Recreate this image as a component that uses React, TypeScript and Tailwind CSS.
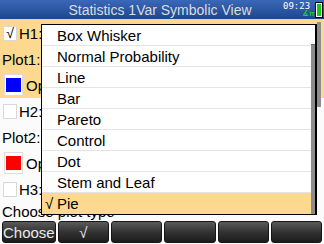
import React from "react";

const plotTypes = [
  "Box Whisker",
  "Normal Probability",
  "Line",
  "Bar",
  "Pareto",
  "Control",
  "Dot",
  "Stem and Leaf",
  "Pie",
];

const softKeys = ["Choose", "√", "", "", "", ""];

function CheckBox({ checked }: { checked?: boolean }) {
  return (
    <div className="ml-[3px] w-[14px] h-[15px] bg-white border border-[#d8d8d8] flex items-center justify-center text-[14px] leading-none text-black">
      {checked ? "√" : ""}
    </div>
  );
}

function ColorBox({ color }: { color: string }) {
  return (
    <div className="ml-[4px] w-[19px] h-[22px] bg-white border border-[#dcdcdc] flex items-center justify-center">
      <div className={`w-[15px] h-[14px] ${color}`} />
    </div>
  );
}

export default function App() {
  return (
    <div className="relative w-[324px] h-[244px] overflow-hidden bg-[#fbfbfb] font-['Liberation_Sans',Arial,sans-serif] text-black">
      {/* Title bar */}
      <div className="relative h-[19px] bg-gradient-to-b from-[#3a68b8] to-[#1d468f] flex items-center justify-center">
        <span className="text-[14px] leading-none text-[#dcdcdc] mr-[4px]">
          Statistics 1Var Symbolic View
        </span>
        <span className="absolute left-[283px] top-[2px] text-[9px] leading-none font-['DejaVu_Sans_Mono',monospace] text-white">
          09:23
        </span>
        <span className="absolute left-[302px] top-[10px] text-[8px] leading-none text-[#22e022]">
          ∡π
        </span>
        <div className="absolute left-[315px] top-[2px] w-[8px] h-[16px] border border-black bg-white p-[1px]">
          <div className="w-full h-full bg-[#18c818]" />
        </div>
      </div>
      <div className="h-[1px] bg-[#e6d3a8]" />

      {/* Symbolic view rows */}
      <div className="flex flex-col text-[15px] leading-none">
        <div className="h-[26px] bg-[#fcd98e] flex items-center">
          <CheckBox checked />
          <span className="ml-[2px]">H1:</span>
        </div>
        <div className="h-[26px] bg-[#fcd98e] flex items-center">
          <span className="ml-[2px]">Plot1:</span>
          <div className="ml-[1px] w-[2px] h-[24px] bg-black" />
        </div>
        <div className="h-[26px] bg-[#fcd98e] flex items-center">
          <ColorBox color="bg-[#0000ff]" />
          <span className="ml-[3px]">Options</span>
        </div>
        <div className="h-[26px] flex items-center">
          <CheckBox />
          <span className="ml-[2px]">H2:</span>
        </div>
        <div className="h-[26px] flex items-center">
          <span className="ml-[2px]">Plot2:</span>
        </div>
        <div className="h-[26px] flex items-center">
          <ColorBox color="bg-[#ff0000]" />
          <span className="ml-[3px]">Options</span>
        </div>
        <div className="h-[26px] flex items-center">
          <CheckBox />
          <span className="ml-[2px]">H3:</span>
        </div>
        <div className="h-[19px] flex items-center">
          <span className="ml-[2px]">Choose plot type</span>
        </div>
      </div>

      {/* Soft keys */}
      <div className="h-[22px] flex gap-[2px] px-[2px]">
        {softKeys.map((k, i) => (
          <div
            key={i}
            className="flex-1 rounded-[3px] border border-[#161616] bg-gradient-to-b from-[#5a5a5a] via-[#333333] to-[#1c1c1c] flex items-center justify-center text-[15px] leading-none text-[#e8e8e8]"
          >
            {k}
          </div>
        ))}
      </div>

      {/* Screen scrollbar */}
      <div className="absolute left-[317px] top-[22px] w-[4px] h-[85px] bg-[#8e8e8e]" />

      {/* Plot type dropdown */}
      <div className="absolute left-[41px] top-[24px] w-[276px] h-[191px] bg-white border border-black border-r-2 flex">
        <div className="flex-1 flex flex-col">
          {plotTypes.map((t) => (
            <div
              key={t}
              className={`h-[21px] flex items-center text-[15px] leading-none ${
                t === "Pie" ? "bg-[#fcd98e]" : "border-b border-[#e4e4e4]"
              }`}
            >
              <span className="w-[15px] pl-[3px]">{t === "Pie" ? "√" : ""}</span>
              <span>{t}</span>
            </div>
          ))}
        </div>
        <div className="w-[4px] flex flex-col">
          <div className="h-[19px]" />
          <div className="flex-1 bg-[#8c8c8c] border-t border-[#6a6a6a]" />
        </div>
      </div>
    </div>
  );
}
